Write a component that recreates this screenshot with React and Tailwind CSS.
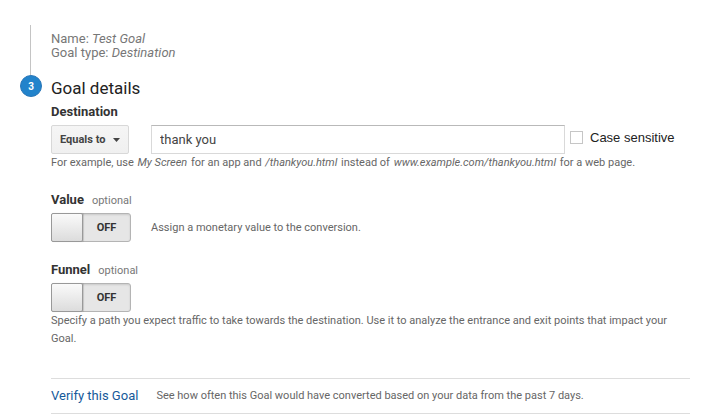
import { useState } from "react";

const ToggleSwitch = ({ id, label, checked, onChange }) => {
  return (
    <label
      htmlFor={id}
      className="relative flex h-[29px] w-20 shrink-0 cursor-pointer rounded-[3px] border border-[#b4b4b4] bg-[#e6e6e6] shadow-[inset_0_1px_2px_rgba(0,0,0,0.12)]"
    >
      <input
        id={id}
        type="checkbox"
        role="switch"
        aria-label={label}
        checked={checked}
        onChange={(e) => onChange(e.target.checked)}
        className="peer sr-only"
      />
      <span className="-my-px -ml-px w-8 shrink-0 rounded-[2px] border border-[#999999] bg-linear-to-b from-[#fafafa] to-[#dcdcdc] shadow-[1px_0_1px_rgba(0,0,0,0.15)] peer-checked:order-last peer-checked:-mr-px peer-checked:ml-0" />
      <span className="flex-1 text-center text-[11px] leading-[27px] font-bold text-[#333333]">
        {checked ? "ON" : "OFF"}
      </span>
    </label>
  );
};

const OptionalTitle = ({ title }) => {
  return (
    <h3 className="mb-1 text-[13px] leading-4 font-bold text-[#333333]">
      {title}
      <span className="ml-2 text-[11px] font-normal text-[#777777]">
        optional
      </span>
    </h3>
  );
};

export default function App() {
  const [matchType, setMatchType] = useState("equals");
  const [destination, setDestination] = useState("thank you");
  const [caseSensitive, setCaseSensitive] = useState(false);
  const [valueOn, setValueOn] = useState(false);
  const [funnelOn, setFunnelOn] = useState(false);

  return (
    <main className="flex min-h-screen gap-[9px] bg-white pt-[25px] pr-7 pl-5 font-['Roboto',sans-serif] text-[#666666]">
      {/* Step rail */}
      <div className="flex w-[22px] shrink-0 flex-col">
        <div className="ml-2.5 h-[50px] w-px bg-[#c4c4c4]" />
        <div className="flex size-[22px] items-center justify-center rounded-full border border-[#2a77b8] bg-[#2283cb] text-[10px] font-bold text-white">
          3
        </div>
      </div>

      <div className="min-w-0 flex-1 pt-[7px]">
        {/* Summary of the previous step */}
        <div className="text-[13px] leading-[14px] text-[#777777]">
          <p>
            Name: <i>Test Goal</i>
          </p>
          <p>
            Goal type: <i>Destination</i>
          </p>
        </div>

        <h2 className="mt-4 text-[17px] leading-6 text-[#222222]">
          Goal details
        </h2>

        {/* Destination */}
        <section className="mt-1">
          <label
            htmlFor="destination"
            className="block text-[13px] leading-4 font-bold text-[#333333]"
          >
            Destination
          </label>
          <div className="mt-[5px] flex items-center">
            <div className="relative w-[78px] shrink-0">
              <select
                aria-label="Match type"
                value={matchType}
                onChange={(e) => setMatchType(e.target.value)}
                className="block h-[29px] w-full appearance-none rounded-[2px] border border-[#d8d8d8] bg-linear-to-b from-[#f5f5f5] to-[#f0f0f0] pt-px pl-2 text-[11px] font-bold text-[#444444]"
              >
                <option value="equals">Equals to</option>
                <option value="begins">Begins with</option>
                <option value="regex">Regular expression</option>
              </select>
              <svg
                className="pointer-events-none absolute top-[13px] right-[9px] h-1 w-[7px] fill-[#444444]"
                viewBox="0 0 7 4"
              >
                <path d="M0 0h7L3.5 4z" />
              </svg>
            </div>
            <input
              id="destination"
              type="text"
              value={destination}
              onChange={(e) => setDestination(e.target.value)}
              className="ml-[22px] h-[29px] min-w-0 flex-1 border border-[#d9d9d9] border-t-[#b9b9b9] bg-white px-2 text-[13px] text-[#444444]"
            />
            <label className="mb-1 ml-[5px] flex w-[120px] shrink-0 items-center gap-[7px] font-['Liberation_Sans',sans-serif] text-[13px] leading-4 text-[#222222]">
              <input
                type="checkbox"
                checked={caseSensitive}
                onChange={(e) => setCaseSensitive(e.target.checked)}
                className="size-[13px] appearance-none border border-[#c6c6c6] bg-white checked:bg-[#2283cb]"
              />
              Case sensitive
            </label>
          </div>
          <p className="text-[11px] leading-[18px]">
            For example, use <i className="mx-px">My Screen</i> for an app and{" "}
            <i className="mx-px">/thankyou.html</i> instead of{" "}
            <i className="mx-px">www.example.com/thankyou.html</i> for a web
            page.
          </p>
        </section>

        {/* Value */}
        <section className="mt-5">
          <OptionalTitle title="Value" />
          <div className="flex items-center gap-5">
            <ToggleSwitch
              id="value"
              label="Value"
              checked={valueOn}
              onChange={setValueOn}
            />
            <p className="text-[11px] leading-[18px]">
              Assign a monetary value to the conversion.
            </p>
          </div>
        </section>

        {/* Funnel */}
        <section className="mt-5">
          <OptionalTitle title="Funnel" />
          <ToggleSwitch
            id="funnel"
            label="Funnel"
            checked={funnelOn}
            onChange={setFunnelOn}
          />
          <p className="text-[11px] leading-[18px]">
            Specify a path you expect traffic to take towards the destination.
            Use it to analyze the entrance and exit points that impact your
            Goal.
          </p>
        </section>

        {/* Verify */}
        <div className="mt-[30px] flex items-center gap-[18px] border-y border-[#dddddd] py-2">
          <a href="#verify" className="text-[13px] leading-[18px] text-[#15599a]">
            Verify this Goal
          </a>
          <p className="text-[11px] leading-[18px]">
            See how often this Goal would have converted based on your data from
            the past 7 days.
          </p>
        </div>
      </div>
    </main>
  );
}
